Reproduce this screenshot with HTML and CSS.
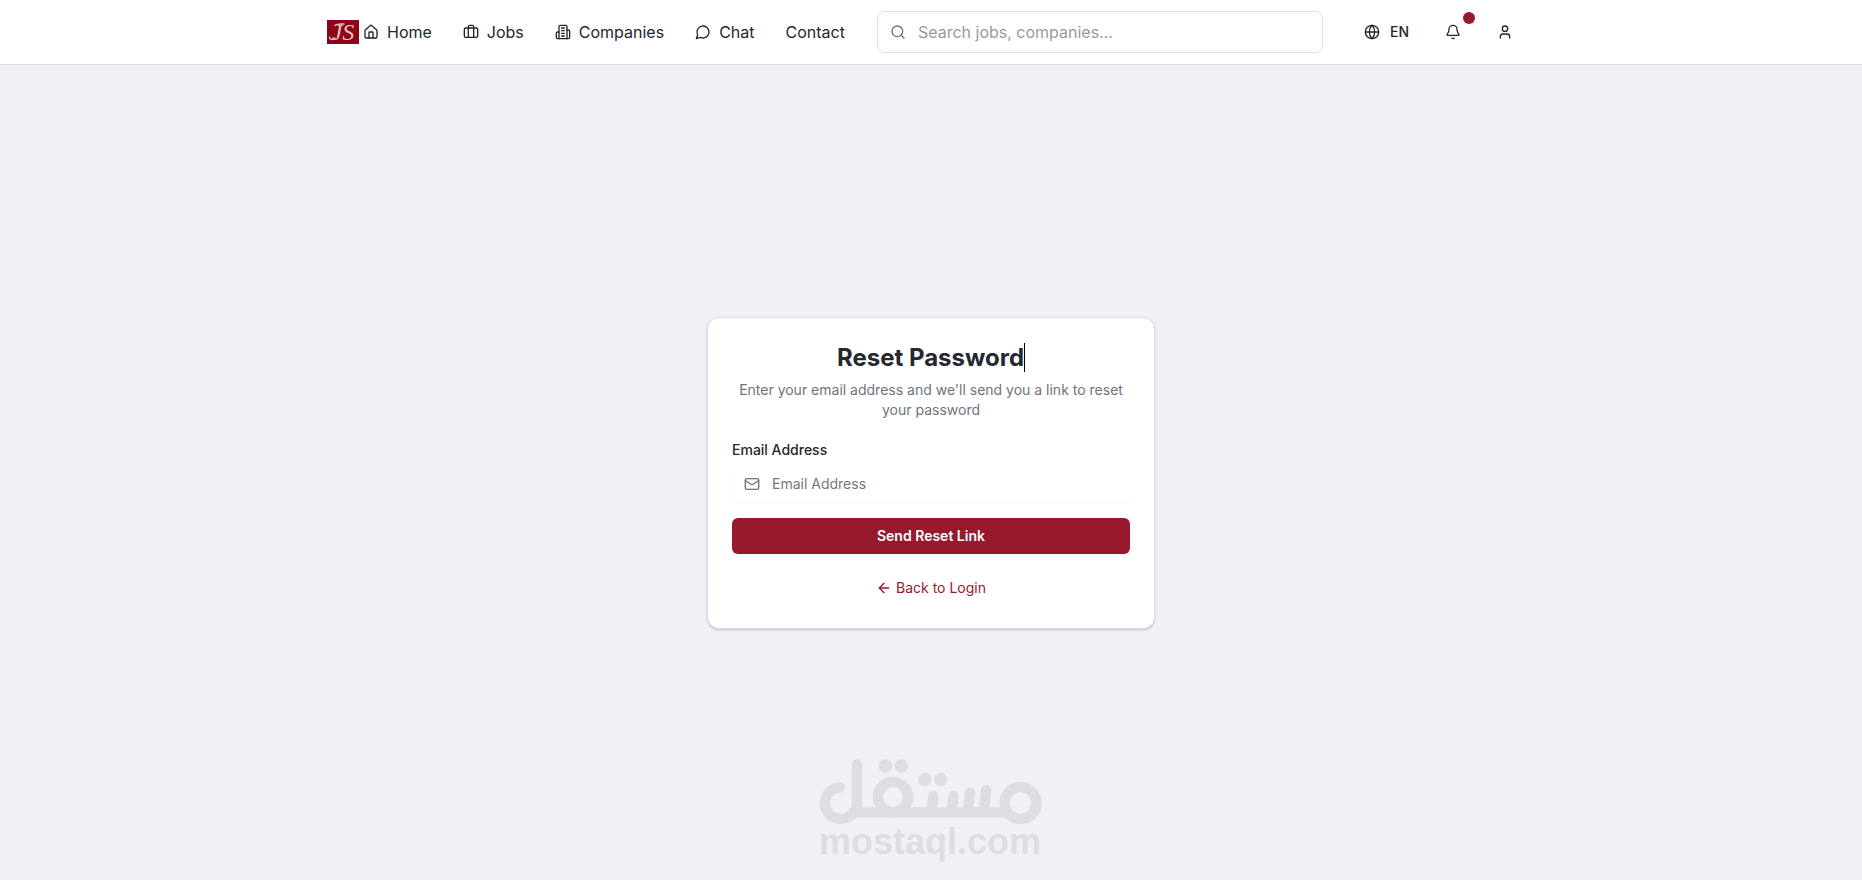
FILE: index.html
```
<!DOCTYPE html>
<html lang="en">
<head>
    <meta charset="UTF-8">
    <meta name="viewport" content="width=device-width, initial-scale=1.0">
    <title>Reset Password</title>
    <link rel="stylesheet" href="styles.css">
</head>
<body>
    <header class="header">
        <div class="header-inner">
            <a class="logo" href="#" aria-label="JS">
                <svg width="32" height="24" viewBox="0 0 32 24">
                    <rect width="32" height="24" fill="#90001c"/>
                    <path class="logo-swash" d="M8 5.500C10 3.500 13 4 17 4M2.500 17C2.500 20 5 20.500 8 18"/>
                    <text class="logo-text" x="16" y="20" text-anchor="middle">JS</text>
                </svg>
            </a>
            <nav class="nav">
                <a href="#">
                    <svg class="icon" viewBox="0 0 24 24"><path d="M15 21v-8a1 1 0 0 0-1-1h-4a1 1 0 0 0-1 1v8"/><path d="M3 10a2 2 0 0 1 .709-1.528l7-5.999a2 2 0 0 1 2.582 0l7 5.999A2 2 0 0 1 21 10v9a2 2 0 0 1-2 2H5a2 2 0 0 1-2-2z"/></svg>
                    Home
                </a>
                <a href="#">
                    <svg class="icon" viewBox="0 0 24 24"><path d="M16 20V4a2 2 0 0 0-2-2h-4a2 2 0 0 0-2 2v16"/><rect width="20" height="14" x="2" y="6" rx="2"/></svg>
                    Jobs
                </a>
                <a href="#">
                    <svg class="icon" viewBox="0 0 24 24"><path d="M6 22V4a2 2 0 0 1 2-2h8a2 2 0 0 1 2 2v18Z"/><path d="M6 12H4a2 2 0 0 0-2 2v6a2 2 0 0 0 2 2h2"/><path d="M18 9h2a2 2 0 0 1 2 2v9a2 2 0 0 1-2 2h-2"/><path d="M10 6h4M10 10h4M10 14h4M10 18h4"/></svg>
                    Companies
                </a>
                <a href="#">
                    <svg class="icon" viewBox="0 0 24 24"><path d="M7.9 20A9 9 0 1 0 4 16.1L2 22Z"/></svg>
                    Chat
                </a>
                <a href="#">Contact</a>
            </nav>
            <label class="search">
                <svg class="icon" viewBox="0 0 24 24"><circle cx="11" cy="11" r="8"/><path d="m21 21-4.3-4.3"/></svg>
                <input type="search" placeholder="Search jobs, companies..." aria-label="Search">
            </label>
            <div class="actions">
                <button class="lang" type="button">
                    <svg class="icon" viewBox="0 0 24 24"><circle cx="12" cy="12" r="10"/><path d="M12 2a14.5 14.5 0 0 0 0 20 14.5 14.5 0 0 0 0-20"/><path d="M2 12h20"/></svg>
                    EN
                </button>
                <button class="icon-button" type="button" aria-label="Notifications">
                    <svg class="icon" viewBox="0 0 24 24"><path d="M10.268 21a2 2 0 0 0 3.464 0"/><path d="M3.262 15.326A1 1 0 0 0 4 17h16a1 1 0 0 0 .74-1.673C19.41 13.956 18 12.499 18 8A6 6 0 0 0 6 8c0 4.499-1.411 5.956-2.738 7.326"/></svg>
                    <span class="dot"></span>
                </button>
                <button class="icon-button" type="button" aria-label="Account">
                    <svg class="icon" viewBox="0 0 24 24"><path d="M19 21v-2a4 4 0 0 0-4-4H9a4 4 0 0 0-4 4v2"/><circle cx="12" cy="7" r="4"/></svg>
                </button>
            </div>
        </div>
    </header>

    <main class="main">
        <form class="card">
            <h1><span class="caret">Reset Password</span></h1>
            <p class="description">Enter your email address and we'll send you a link to reset your password</p>
            <label class="field-label" for="email">Email Address</label>
            <div class="field">
                <svg class="icon" viewBox="0 0 24 24"><rect width="20" height="16" x="2" y="4" rx="2"/><path d="m22 7-8.97 5.7a1.94 1.94 0 0 1-2.06 0L2 7"/></svg>
                <input id="email" type="email" placeholder="Email Address">
            </div>
            <button class="submit" type="submit">Send Reset Link</button>
            <a class="back" href="#">
                <svg class="icon" viewBox="0 0 24 24"><path d="m12 19-7-7 7-7"/><path d="M19 12H5"/></svg>
                Back to Login
            </a>
        </form>
    </main>

    <svg class="watermark" width="260" height="140" viewBox="1 0 260 140" role="img" aria-label="mostaql.com">
        <g class="mark-lines">
            <path d="M40 47.5A15.7 15.7 0 1 0 51.500 74.500Q57 70 57 64V24.500"/>
            <path d="M56 72.5H206"/>
            <circle cx="93" cy="57" r="15"/>
            <path d="M133.500 56 131.500 70M153.500 56 151.500 70M170 52.500 168 70M186 50 184 70"/>
            <circle cx="220.5" cy="63" r="16"/>
        </g>
        <g class="mark-fill">
            <circle cx="85.5" cy="26" r="6.7"/>
            <circle cx="101.5" cy="26" r="6.7"/>
            <circle cx="124.7" cy="39.5" r="6.7"/>
            <circle cx="140.6" cy="39.5" r="6.7"/>
            <text class="mark-text" x="130" y="114" text-anchor="middle">mostaql.com</text>
        </g>
    </svg>
</body>
</html>
```
FILE: styles.css
```
* {
    box-sizing: border-box;
}
body {
    margin: 0;
    min-height: 100vh;
    display: flex;
    flex-direction: column;
    position: relative;
    font-family: Inter, "Liberation Sans", sans-serif;
    font-size: 14px;
    line-height: 20px;
    background-color: #f0f1f7;
    color: #25262f;
}
a {
    color: inherit;
    text-decoration: none;
}
button,
input {
    font: inherit;
    color: inherit;
    border: 0;
    background: none;
    padding: 0;
}
.icon {
    width: 16px;
    height: 16px;
    flex: none;
    fill: none;
    stroke: currentColor;
    stroke-width: 2;
    stroke-linecap: round;
    stroke-linejoin: round;
}

/* header */
.header {
    background-color: #fff;
    border-bottom: 1px solid #d9deee;
}
.header-inner {
    max-width: 1208px;
    height: 64px;
    margin: 0 auto;
    display: flex;
    align-items: center;
}
.logo {
    display: flex;
    margin-right: 4px;
}
.logo-text {
    font: italic 24px "Liberation Serif", serif;
    fill: #dcc6b4;
}
.logo-swash {
    fill: none;
    stroke: #dcc6b4;
    stroke-width: 1.5;
    stroke-linecap: round;
}
.nav {
    display: flex;
    gap: 31px;
    font-size: 16px;
    line-height: 24px;
}
.nav a {
    display: flex;
    align-items: center;
    gap: 8px;
}
.search {
    flex: 1;
    min-width: 0;
    height: 42px;
    margin: 0 29px 0 32px;
    padding: 0 12px;
    display: flex;
    align-items: center;
    gap: 12px;
    border: 1px solid #d9deee;
    border-radius: 8px;
    color: #737080;
}
.search input {
    flex: 1;
    min-width: 0;
    font-size: 16px;
    outline: none;
}
.search input::placeholder {
    color: #979aa1;
}
.actions {
    display: flex;
    align-items: center;
    gap: 16px;
    padding-right: 12px;
}
.lang {
    height: 36px;
    padding: 0 10px 0 12px;
    display: flex;
    align-items: center;
    gap: 10px;
    font-weight: 500;
}
.icon-button {
    position: relative;
    width: 36px;
    height: 36px;
    display: flex;
    align-items: center;
    justify-content: center;
}
.dot {
    position: absolute;
    top: -2px;
    right: -4px;
    width: 12px;
    height: 12px;
    border-radius: 50%;
    background-color: #97192e;
}

/* reset form */
.main {
    flex: 1;
    display: flex;
    align-items: center;
    justify-content: center;
}
.card {
    width: 100%;
    max-width: 448px;
    padding: 24px;
    display: flex;
    flex-direction: column;
    background-color: #fff;
    border: 1px solid #d9deee;
    border-radius: 12px;
    box-shadow: 0 1px 3px rgba(0,0,0,0.1), 0 1px 2px rgba(0,0,0,0.1);
}
h1 {
    margin: 0;
    font-size: 24px;
    line-height: 32px;
    font-weight: 700;
    text-align: center;
    color: #25282f;
}
.caret {
    border-right: 1px solid #000;
}
.description {
    margin: 6px 0 20px;
    text-align: center;
    color: #6f737c;
}
.field-label {
    margin-bottom: 6px;
    font-weight: 500;
}
.field {
    height: 36px;
    margin-bottom: 16px;
    padding: 0 12px;
    display: flex;
    align-items: center;
    gap: 12px;
    border-radius: 6px;
    box-shadow: 0 1px 2px rgba(0,0,0,0.05);
    color: #737080;
}
.field input {
    flex: 1;
    min-width: 0;
    outline: none;
}
.field input::placeholder {
    color: #737780;
}
.submit {
    height: 36px;
    border-radius: 6px;
    background-color: #97192e;
    color: #fff;
    font-weight: 600;
    box-shadow: 0 1px 2px rgba(0,0,0,0.05);
}
.back {
    align-self: center;
    margin-top: 20px;
    padding: 4px 0 6px;
    display: flex;
    align-items: center;
    gap: 4px;
    color: #97192e;
}

/* watermark at the bottom of the page */
.watermark {
    position: absolute;
    bottom: 0;
    left: 50%;
    transform: translateX(-50%);
    pointer-events: none;
}
.mark-lines {
    fill: none;
    stroke: #dddee2;
    stroke-width: 10.5;
    stroke-linecap: round;
    stroke-linejoin: round;
}
.mark-fill {
    fill: #dddee2;
}
.mark-text {
    font: bold 36px "Liberation Sans", sans-serif;
}
```
